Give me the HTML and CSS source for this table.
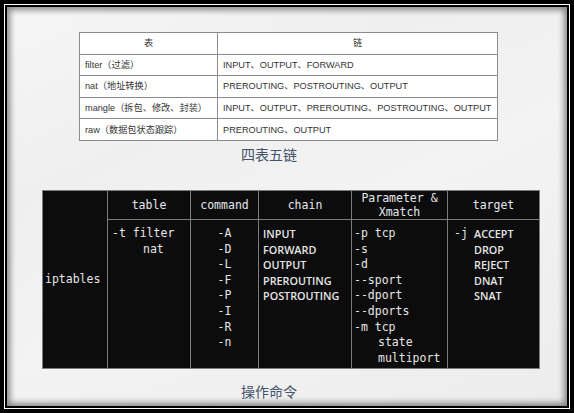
FILE: index.html
```html
<!DOCTYPE html>
<html lang="zh">
<head>
<meta charset="utf-8">
<link rel="stylesheet" href="styles.css">
</head>
<body>
<div class="frame">
  <div class="inner">
    <table class="t1">
      <colgroup><col class="c1a"><col class="c1b"></colgroup>
      <tr class="hd"><td>表</td><td>链</td></tr>
      <tr><td>filter（过滤）</td><td>INPUT、OUTPUT、FORWARD</td></tr>
      <tr><td>nat（地址转换）</td><td>PREROUTING、POSTROUTING、OUTPUT</td></tr>
      <tr><td>mangle（拆包、修改、封装）</td><td>INPUT、OUTPUT、PREROUTING、POSTROUTING、OUTPUT</td></tr>
      <tr><td>raw（数据包状态跟踪）</td><td>PREROUTING、OUTPUT</td></tr>
    </table>
    <div class="cap1">四表五链</div>
    <table class="t2">
      <colgroup>
        <col class="w1"><col class="w2"><col class="w3"><col class="w4"><col class="w5"><col class="w6">
      </colgroup>
      <tr class="h2">
        <td rowspan="2" class="ipt">iptables</td>
        <th>table</th>
        <th>command</th>
        <th>chain</th>
        <th class="two">Parameter &amp;<br>Xmatch</th>
        <th>target</th>
      </tr>
      <tr class="b2">
        <td class="tbl"><div>-t filter</div><div class="ind-nat">nat</div></td>
        <td class="cmd"><div>-A</div><div>-D</div><div>-L</div><div>-F</div><div>-P</div><div>-I</div><div>-R</div><div>-n</div></td>
        <td class="chn"><div>INPUT</div><div>FORWARD</div><div>OUTPUT</div><div>PREROUTING</div><div>POSTROUTING</div></td>
        <td class="par"><div>-p tcp</div><div>-s</div><div>-d</div><div>--sport</div><div>--dport</div><div>--dports</div><div>-m tcp</div><div class="ind">state</div><div class="ind">multiport</div></td>
        <td class="tgt">
          <div class="tgtwrap">
            <div class="j">-j</div>
            <div class="names"><div>ACCEPT</div><div>DROP</div><div>REJECT</div><div>DNAT</div><div>SNAT</div></div>
          </div>
        </td>
      </tr>
    </table>
    <div class="cap2">操作命令</div>
  </div>
</div>
</body>
</html>
```
FILE: styles.css
```css
* { box-sizing: border-box; }
html, body { margin: 0; padding: 0; background: #000; }
.frame {
  width: 574px;
  height: 413px;
  border: 4px solid #000;
  background: #fff;
  padding: 1px;
}
.inner {
  height: 100%;
  border: 2px solid #000;
  background: linear-gradient(155deg, #f6f6f6 0%, #efefef 30%, #f3f3f3 55%, #ececec 100%);
  box-shadow: inset 0 0 6px 3px rgba(0,0,0,0.45);
  display: flex;
  flex-direction: column;
  align-items: flex-start;
}
.t1 {
  margin: 25px 0 0 72px;
  width: 418px;
  border-collapse: collapse;
  table-layout: fixed;
  background: #fff;
  font-family: "Liberation Sans", "Noto Sans CJK SC", sans-serif;
  font-size: 9.2px;
  color: #333;
}
.c1a { width: 138px; }
.c1b { width: 280px; }
.t1 td {
  border: 1px solid #8c8c8c;
  height: 21.6px;
  padding: 0 0 0 5px;
  white-space: nowrap;
  line-height: 12px;
}
.t1 .hd td { text-align: center; padding: 0; }
.cap1, .cap2 {
  margin: 3px 0 0 234px;
  font-family: "Noto Sans CJK SC", sans-serif;
  font-size: 14px;
  line-height: 20px;
  color: #44546a;
}
.cap2 { margin-top: 12px; }
.t2 {
  margin: 26px 0 0 35px;
  width: 497px;
  border-collapse: collapse;
  table-layout: fixed;
  background: #0c0c0c;
  color: #e6e6e6;
  font-family: "DejaVu Sans Mono", "Liberation Mono", monospace;
  font-size: 11.5px;
}
.w1 { width: 65px; }
.w2 { width: 83px; }
.w3 { width: 68px; }
.w4 { width: 93px; }
.w5 { width: 96px; }
.w6 { width: 92px; }
.t2 td, .t2 th {
  border: 1px solid #7c7c7c;
  padding: 0;
}
.t2 th {
  font-weight: normal;
  height: 27px;
  text-align: center;
  color: #e4e9ef;
  line-height: 14px;
}
.t2 .ipt { vertical-align: middle; padding-left: 2px; }
.b2 td {
  height: 149px;
  vertical-align: top;
  padding-top: 6px;
  line-height: 15.6px;
  white-space: nowrap;
}
.b2 .tbl { padding-left: 4px; }
.ind-nat { padding-left: 31px; }
.b2 .cmd { text-align: center; }
.b2 .chn, .b2 .names {
  font-family: "Open Sans", "Liberation Sans", sans-serif;
  font-size: 10.8px;
  font-weight: 600;
}
.b2 .chn { padding-left: 4px; }
.b2 .par { padding-left: 2px; }
.ind { padding-left: 24px; }
.b2 .tgt { padding-left: 6px; }
.tgtwrap { display: flex; }
.j { width: 20px; }
```
